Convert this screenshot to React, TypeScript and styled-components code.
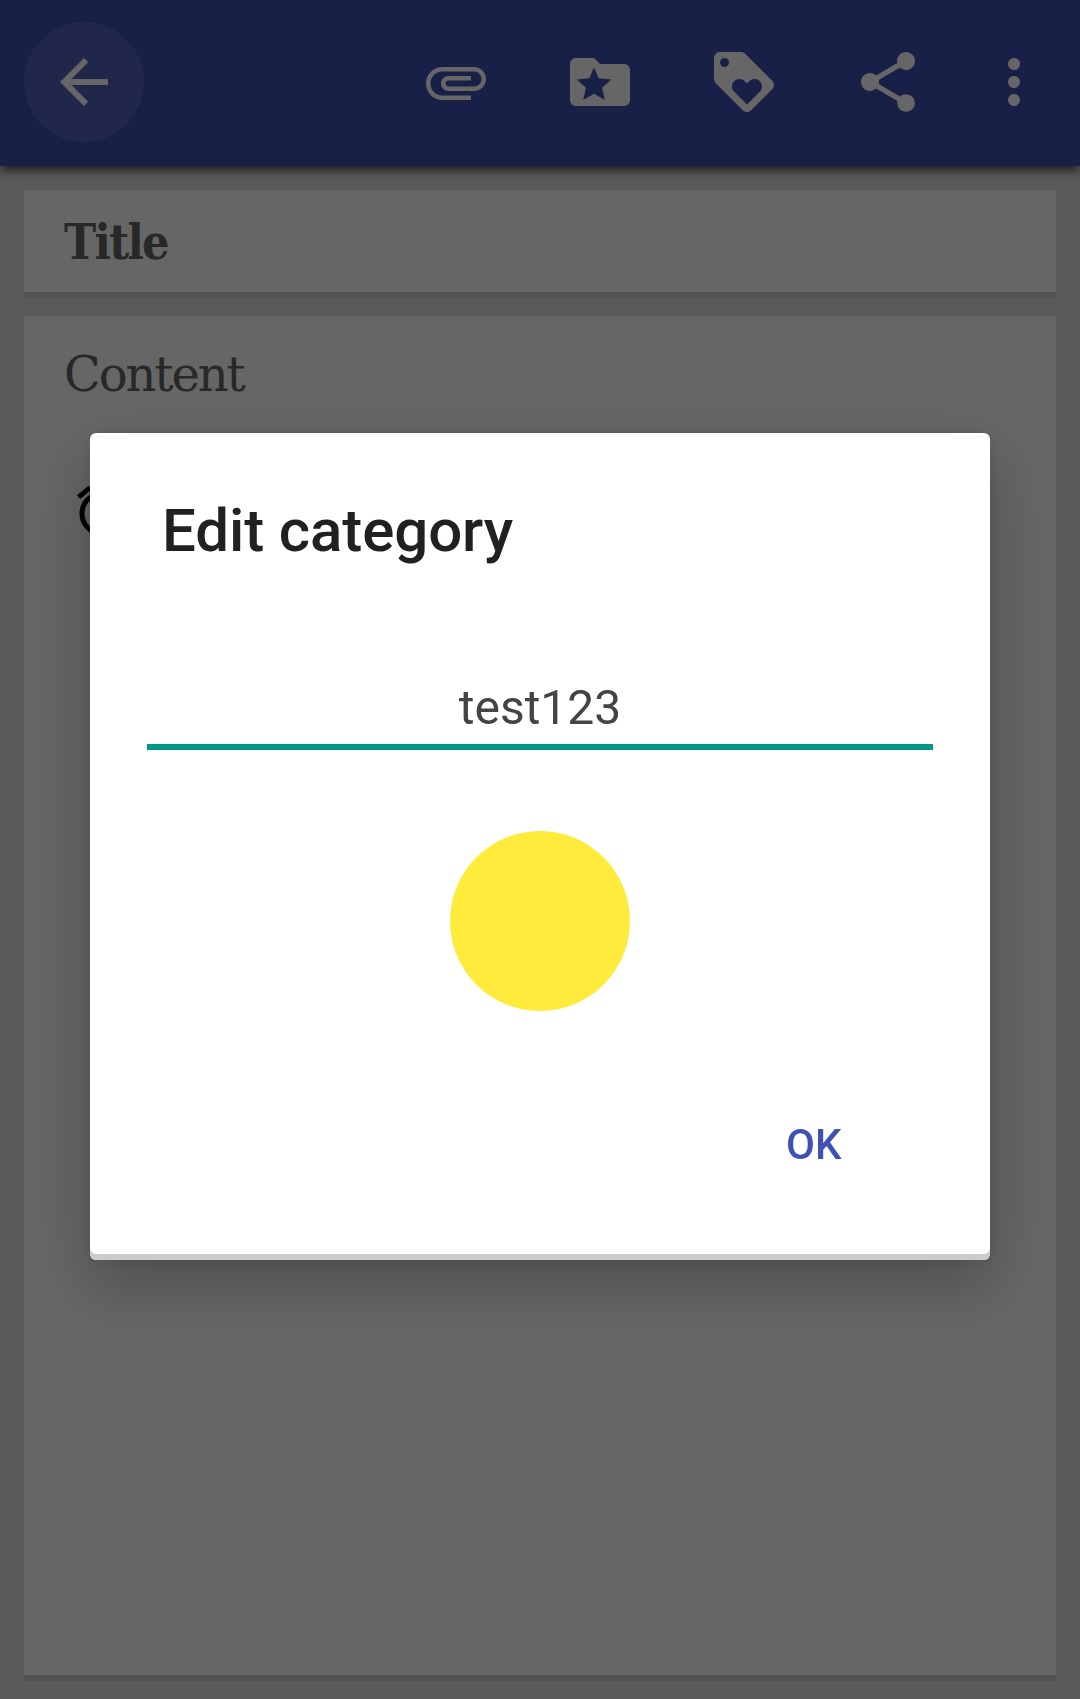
import React from 'react';
import styled, { createGlobalStyle } from 'styled-components';

const GlobalStyle = createGlobalStyle`
  *, *::before, *::after { box-sizing: border-box; }
  html, body { margin: 0; padding: 0; background: #e1e1e1; }
  body { font-family: Roboto, 'Liberation Sans', sans-serif; overflow: hidden; }
  button { appearance: none; border: 0; padding: 0; background: none; font: inherit; }
`;

const Screen = styled.div`
  display: flex;
  flex-direction: column;
  width: 1080px;
  height: 1699px;
  background: #e1e1e1;
`;

const Toolbar = styled.header`
  display: flex;
  align-items: center;
  justify-content: space-between;
  flex: none;
  height: 166px;
  padding: 0 30px 2px 24px;
  background: #3f51b5;
  box-shadow: 0 4px 10px rgba(0, 0, 0, 0.7);
`;

const BackButton = styled.button`
  display: grid;
  place-items: center;
  width: 120px;
  height: 120px;
  border-radius: 50%;
  background: rgba(255, 255, 255, 0.1);
`;

const Actions = styled.div`
  display: flex;
  align-items: center;
  gap: 72px;
`;

const ActionButton = styled.button<{ $last?: boolean }>`
  display: grid;
  place-items: center;
  margin-left: ${(p) => (p.$last ? '-18px' : '0')};
`;

const Icon = styled.svg<{ $size?: number; $color?: string }>`
  display: block;
  width: ${(p) => p.$size ?? 72}px;
  height: ${(p) => p.$size ?? 72}px;
  fill: ${(p) => p.$color ?? '#fff'};
`;

const Note = styled.main`
  display: flex;
  flex-direction: column;
  flex: 1;
  gap: 18px;
  padding: 24px 24px 18px;
`;

const Card = styled.section<{ $grow?: boolean }>`
  flex: ${(p) => (p.$grow ? '1' : 'none')};
  height: ${(p) => (p.$grow ? 'auto' : '108px')};
  padding: ${(p) => (p.$grow ? '26px 40px' : '20px 40px')};
  background: #fff;
  border-bottom: 6px solid #cdcdcd;
`;

const FieldText = styled.div<{ $bold?: boolean }>`
  font-family: ${(p) =>
    p.$bold
      ? "'Roboto Slab', 'DejaVu Serif Condensed', 'DejaVu Serif', serif"
      : "'Roboto Slab', 'DejaVu Serif', serif"};
  font-stretch: ${(p) => (p.$bold ? 'condensed' : 'normal')};
  font-size: 48px;
  line-height: 64px;
  font-weight: ${(p) => (p.$bold ? 700 : 400)};
  letter-spacing: ${(p) => (p.$bold ? '-1.7px' : '-2.1px')};
  color: #646464;
`;

const Reminder = styled.div`
  margin: 75px 0 0 7.5px;
`;

const Scrim = styled.div`
  position: fixed;
  inset: 0;
  display: flex;
  justify-content: center;
  align-items: flex-start;
  padding-top: 433px;
  background: rgba(0, 0, 0, 0.6);
`;

const Dialog = styled.div`
  display: flex;
  flex-direction: column;
  width: 900px;
  height: 827px;
  padding: 61px 57px 0;
  background: #fff;
  border-radius: 6px;
  box-shadow: inset 0 -6px 0 #cbcbcb, 0 24px 64px rgba(0, 0, 0, 0.26),
    0 0 16px rgba(0, 0, 0, 0.08);
`;

const DialogTitle = styled.h2`
  margin: 0 0 0 15px;
  font-size: 60px;
  line-height: 74px;
  font-weight: 500;
  letter-spacing: -0.1px;
  color: #212121;
`;

const NameField = styled.div`
  margin-top: 101px;
  height: 81px;
  padding-top: 6px;
  border-bottom: 6px solid #009688;
  font-size: 48px;
  line-height: 66px;
  text-align: center;
  color: #444;
`;

const Swatch = styled.button`
  align-self: center;
  flex: none;
  margin-top: 81px;
  width: 180px;
  height: 180px;
  border-radius: 50%;
  background: #ffeb3b;
`;

const ButtonBar = styled.div`
  display: flex;
  justify-content: flex-end;
  margin-top: 109px;
  padding-right: 91.5px;
`;

const OkButton = styled.button`
  font-size: 42px;
  line-height: 50px;
  font-weight: 500;
  color: #3f51b5;
`;

const paths = {
  back: 'M20 11H7.83l5.59-5.59L12 4l-8 8 8 8 1.41-1.41L7.83 13H20v-2z',
  attach:
    'M7.5 18C4.46 18 2 15.54 2 12.5S4.46 7 7.5 7H18c2.21 0 4 1.79 4 4s-1.79 4-4 4H9.5C8.12 15 7 13.88 7 12.5S8.12 10 9.5 10H17v1.5H9.5c-.55 0-1 .45-1 1s.45 1 1 1H18c1.38 0 2.5-1.12 2.5-2.5S19.38 8.5 18 8.5H7.5c-2.21 0-4 1.79-4 4s1.79 4 4 4H17V18H7.5z',
  category:
    'M20 6h-8l-2-2H4c-1.1 0-2 .9-2 2v12c0 1.1.9 2 2 2h16c1.1 0 2-.9 2-2V8c0-1.1-.9-2-2-2zM10 7.1l1.57 3.65 4.2.4-3.1 2.75.95 4.1L10 15.95 6.38 18l.95-4.1-3.1-2.75 4.2-.4z',
  tag: 'M21.41 11.58l-9-9C12.05 2.22 11.55 2 11 2H4c-1.1 0-2 .9-2 2v7c0 .55.22 1.05.59 1.42l9 9c.36.36.86.58 1.41.58.55 0 1.05-.22 1.41-.59l7-7c.37-.36.59-.86.59-1.41 0-.55-.23-1.06-.59-1.42zM5.5 7C4.67 7 4 6.33 4 5.5S4.67 4 5.5 4 7 4.67 7 5.5 6.33 7 5.5 7zm11.77 8.27L13 19.54l-4.27-4.27C8.28 14.81 8 14.19 8 13.5c0-1.38 1.12-2.5 2.5-2.5.69 0 1.32.28 1.77.74l.73.72.73-.73c.45-.45 1.08-.73 1.77-.73 1.38 0 2.5 1.12 2.5 2.5 0 .69-.28 1.32-.73 1.77z',
  share:
    'M18 16.08c-.76 0-1.44.3-1.96.77L8.91 12.7c.05-.23.09-.46.09-.7s-.04-.47-.09-.7l7.05-4.11c.54.5 1.25.81 2.04.81 1.66 0 3-1.34 3-3s-1.34-3-3-3-3 1.34-3 3c0 .24.04.47.09.7L8.04 9.81C7.5 9.31 6.79 9 6 9c-1.66 0-3 1.34-3 3s1.34 3 3 3c.79 0 1.5-.31 2.04-.81l7.12 4.16c-.05.21-.08.43-.08.65 0 1.61 1.31 2.92 2.92 2.92s2.92-1.31 2.92-2.92-1.31-2.92-2.92-2.92z',
  more: 'M12 8c1.1 0 2-.9 2-2s-.9-2-2-2-2 .9-2 2 .9 2 2 2zm0 2c-1.1 0-2 .9-2 2s.9 2 2 2 2-.9 2-2-.9-2-2-2zm0 6c-1.1 0-2 .9-2 2s.9 2 2 2 2-.9 2-2-.9-2-2-2z',
  alarm:
    'M7.88 3.39L6.6 1.86 2 5.71l1.29 1.53 4.59-3.85zM22 5.72l-4.6-3.86-1.29 1.53 4.6 3.86L22 5.72zM12 4c-4.97 0-9 4.03-9 9s4.02 9 9 9c4.97 0 9-4.03 9-9s-4.03-9-9-9zm0 16c-3.87 0-7-3.13-7-7s3.13-7 7-7 7 3.13 7 7-3.13 7-7 7zm1-11h-2v3H8v2h3v3h2v-3h3v-2h-3V9z',
};

type GlyphProps = { name: keyof typeof paths; size?: number; color?: string };

const Glyph = ({ name, size, color }: GlyphProps) => (
  <Icon viewBox="0 0 24 24" $size={size} $color={color} aria-hidden="true">
    <path fillRule="evenodd" d={paths[name]} />
  </Icon>
);

const actions: { name: keyof typeof paths; label: string }[] = [
  { name: 'attach', label: 'Attach' },
  { name: 'category', label: 'Category' },
  { name: 'tag', label: 'Tag' },
  { name: 'share', label: 'Share' },
  { name: 'more', label: 'More' },
];

export default function App() {
  return (
    <>
      <GlobalStyle />
      <Screen>
        <Toolbar>
          <BackButton aria-label="Back">
            <Glyph name="back" />
          </BackButton>
          <Actions>
            {actions.map(({ name, label }) => (
              <ActionButton key={name} aria-label={label} $last={name === 'more'}>
                <Glyph name={name} />
              </ActionButton>
            ))}
          </Actions>
        </Toolbar>
        <Note>
          <Card>
            <FieldText $bold>Title</FieldText>
          </Card>
          <Card $grow>
            <FieldText>Content</FieldText>
            <Reminder>
              <Glyph name="alarm" size={60} color="#000" />
            </Reminder>
          </Card>
        </Note>
      </Screen>
      <Scrim>
        <Dialog role="dialog" aria-label="Edit category">
          <DialogTitle>Edit category</DialogTitle>
          <NameField>test123</NameField>
          <Swatch aria-label="Color" />
          <ButtonBar>
            <OkButton>OK</OkButton>
          </ButtonBar>
        </Dialog>
      </Scrim>
    </>
  );
}
